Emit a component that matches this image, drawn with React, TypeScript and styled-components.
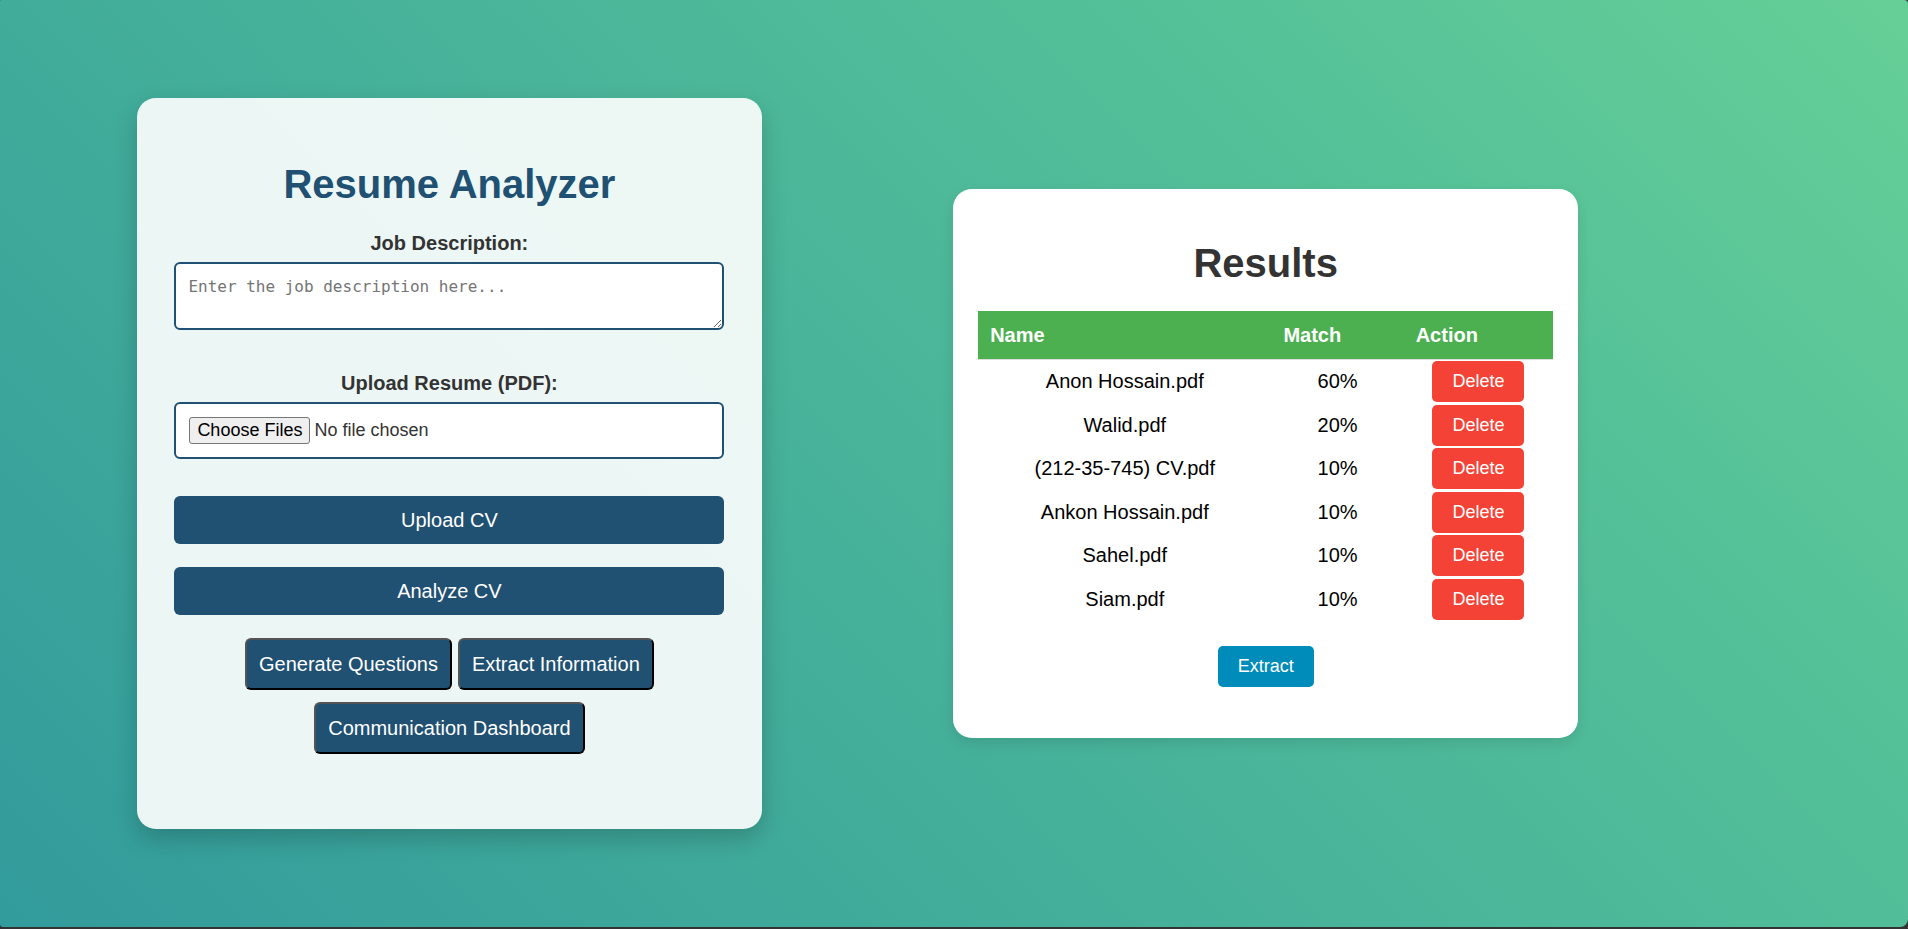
import React from "react";
import styled, { createGlobalStyle } from "styled-components";

const navy = "#205072";

const GlobalStyle = createGlobalStyle`
  *, *::before, *::after { box-sizing: border-box; }
  html { background: #333; }
  body {
    margin: 0;
    font-family: "Liberation Sans", Arial, sans-serif;
    font-size: 20px;
    line-height: 23px;
    color: #333;
  }
`;

const Page = styled.main`
  display: grid;
  grid-template-columns: minmax(0, 625px) minmax(0, 625px);
  column-gap: 10vw;
  align-items: center;
  min-height: calc(100vh - 2px);
  padding: 24px 7.2vw;
  background: linear-gradient(45deg, #329b9c, #56c298 76%, #66cf97);
  border-radius: 1px 4px 8px 3px;
`;

const Card = styled.section<{ $solid?: boolean }>`
  border-radius: 19px;
  text-align: center;
  padding: ${(p) => (p.$solid ? "51px 25px" : "63px 38px 75px 37px")};
  background: ${(p) => (p.$solid ? "#fff" : "rgba(255, 255, 255, 0.9)")};
  box-shadow: ${(p) =>
    p.$solid ? "0 5px 13px rgba(0, 0, 0, 0.1)" : "0 10px 25px rgba(0, 0, 0, 0.2)"};
`;

const Title = styled.h1<{ $color: string }>`
  margin: 0 0 25px;
  font-size: 40px;
  line-height: 46px;
  color: ${(p) => p.$color};
`;

const Field = styled.div`
  display: flow-root;
  margin-bottom: 37px;
`;

const Label = styled.label`
  display: block;
  margin-bottom: 7px;
  font-weight: bold;
`;

const TextArea = styled.textarea`
  display: block;
  width: 100%;
  height: 68px;
  margin-bottom: 5px;
  padding: 13px 12px;
  border: 2px solid ${navy};
  border-radius: 6px;
  background: #fff;
  font: 16px/20px "DejaVu Sans Mono", monospace;
  resize: vertical;
  &::placeholder { color: #757575; }
`;

const FileInput = styled.input`
  display: block;
  width: 100%;
  padding: 13px;
  border: 2px solid ${navy};
  border-radius: 6px;
  background: #fff;
  color: #333;
  font: 18px/21px "Liberation Sans", Arial, sans-serif;

  &::file-selector-button {
    height: 27px;
    margin: 0 4px 0 0;
    padding: 0 7px;
    border: 1px solid #767676;
    border-radius: 3px;
    background: #efefef;
    color: #000;
    font: inherit;
  }
`;

const Button = styled.button`
  font: 20px/23px "Liberation Sans", Arial, sans-serif;
  color: #fff;
  background: ${navy};
  border-radius: 6px;
  cursor: pointer;
`;

const WideButton = styled(Button)`
  display: block;
  width: 100%;
  height: 48px;
  margin-bottom: 23px;
  border: 0;
`;

const LinkButton = styled(Button)`
  height: 52px;
  padding: 0 12px;
  border: 2px outset #000;
`;

const Links = styled.nav`
  display: flex;
  flex-wrap: wrap;
  justify-content: center;
  gap: 12px 6px;
`;

const SmallButton = styled(Button)<{ $color: string }>`
  height: 41px;
  padding: 0 20px;
  border: 0;
  border-radius: 5px;
  font-size: 18px;
  background: ${(p) => p.$color};
`;

const Table = styled.table`
  width: 100%;
  margin-bottom: 25px;
  border-collapse: separate;
  border-spacing: 0;
  table-layout: fixed;
  color: #000;
`;

const HeadCell = styled.th<{ $width: string }>`
  width: ${(p) => p.$width};
  height: 49px;
  padding: 0 12px;
  border-bottom: 1px solid #ddd;
  text-align: left;
  color: #fff;
  background: #4caf50;
`;

const Row = styled.tr`
  height: 43px;
  &:nth-child(even) { height: 44px; }
`;

const Cell = styled.td`
  padding: 0;
  vertical-align: middle;

  ${SmallButton} {
    display: block;
    margin: 0 auto;
  }
`;

const results = [
  { name: "Anon Hossain.pdf", match: 60 },
  { name: "Walid.pdf", match: 20 },
  { name: "(212-35-745) CV.pdf", match: 10 },
  { name: "Ankon Hossain.pdf", match: 10 },
  { name: "Sahel.pdf", match: 10 },
  { name: "Siam.pdf", match: 10 },
];

export default function App() {
  return (
    <>
      <GlobalStyle />
      <Page>
        <Card>
          <Title $color={navy}>Resume Analyzer</Title>
          <form onSubmit={(e) => e.preventDefault()}>
            <Field>
              <Label htmlFor="job">Job Description:</Label>
              <TextArea id="job" placeholder="Enter the job description here..." />
            </Field>
            <Field>
              <Label htmlFor="resume">Upload Resume (PDF):</Label>
              <FileInput id="resume" type="file" accept=".pdf" multiple />
            </Field>
            <WideButton type="button">Upload CV</WideButton>
            <WideButton type="button">Analyze CV</WideButton>
          </form>
          <Links>
            <LinkButton type="button">Generate Questions</LinkButton>
            <LinkButton type="button">Extract Information</LinkButton>
            <LinkButton type="button">Communication Dashboard</LinkButton>
          </Links>
        </Card>
        <Card $solid>
          <Title $color="#333">Results</Title>
          <Table>
            <thead>
              <tr>
                <HeadCell $width="51%">Name</HeadCell>
                <HeadCell $width="23%">Match</HeadCell>
                <HeadCell $width="26%">Action</HeadCell>
              </tr>
            </thead>
            <tbody>
              {results.map((r) => (
                <Row key={r.name}>
                  <Cell>{r.name}</Cell>
                  <Cell>{r.match}%</Cell>
                  <Cell>
                    <SmallButton type="button" $color="#f44336">Delete</SmallButton>
                  </Cell>
                </Row>
              ))}
            </tbody>
          </Table>
          <SmallButton type="button" $color="#008cba">Extract</SmallButton>
        </Card>
      </Page>
    </>
  );
}
